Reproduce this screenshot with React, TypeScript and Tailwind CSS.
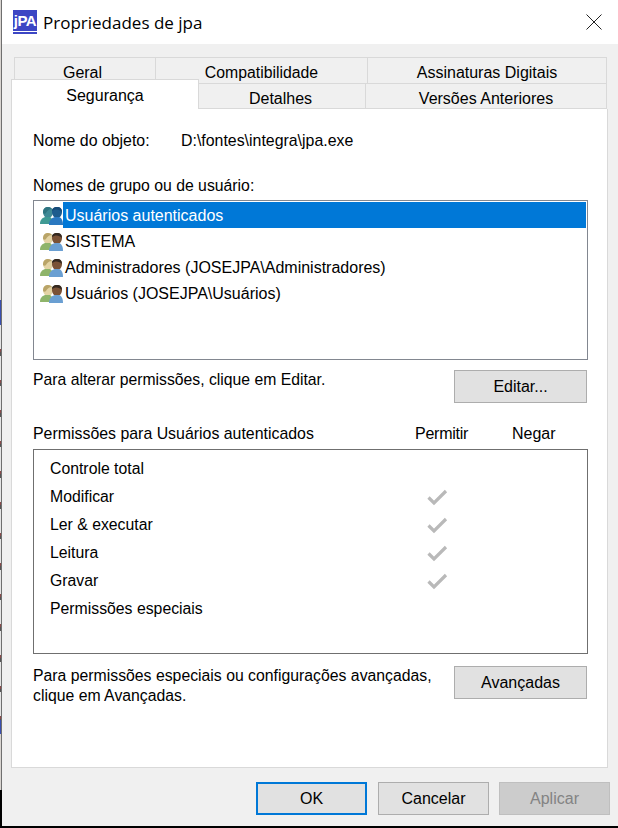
import React from 'react';

const font = "font-['Liberation_Sans',Arial,sans-serif]";

type IconProps = { selected?: boolean };

const UsersIcon: React.FC<IconProps> = ({ selected }) => (
  <svg width="23" height="21" viewBox="0 0 23 21" className="shrink-0">
    <path d="M3 7c0-3 2-5 5-5s5 2 5 5-2 6-5 6-5-3-5-6z" fill={selected ? '#3f8a96' : '#e3d3a4'} />
    <path d="M3 8c0-4 2-6 5-6 2 0 3 1 4 2-3 0-5 2-6 4-1 1-2 1-3 0z" fill={selected ? '#2f7480' : '#b9a468'} />
    <path d="M0 19c0-4 2-6 5-7h5c2 1 3 3 3 7z" fill={selected ? '#3f9a94' : '#8eb46a'} />
    <path d="M12 7c0-3 2-5 5-5s5 2 5 5-2 6-5 6-5-3-5-6z" fill={selected ? '#1d5c8e' : '#7a5236'} />
    <path d="M12 6c0-3 2-4 5-4s5 1 5 5c-2-2-5-3-8-2z" fill={selected ? '#154a78' : '#33281f'} />
    <path d="M9 20c0-4 2-7 6-8h4c3 1 4 4 4 8z" fill={selected ? '#2a78c0' : '#6a9fd2'} />
  </svg>
);

const CheckIcon = () => (
  <svg width="22" height="18" viewBox="0 0 22 18">
    <path d="M2.5 9.5L8 15L20 3" fill="none" stroke="#b9b9b9" strokeWidth="3.2" />
  </svg>
);

const TopTab: React.FC<{ label: string; className: string }> = ({ label, className }) => (
  <div className={`h-[27px] border-t border-l border-[#d9d9d9] bg-[#f0f0f0] text-center leading-[29px] ${className}`}>
    {label}
  </div>
);

const users = [
  'Usuários autenticados',
  'SISTEMA',
  'Administradores (JOSEJPA\\Administradores)',
  'Usuários (JOSEJPA\\Usuários)',
];

const permissions = [
  { name: 'Controle total', allowed: false },
  { name: 'Modificar', allowed: true },
  { name: 'Ler & executar', allowed: true },
  { name: 'Leitura', allowed: true },
  { name: 'Gravar', allowed: true },
  { name: 'Permissões especiais', allowed: false },
];

const App: React.FC = () => {
  return (
    <div className={`${font} flex h-[828px] w-[618px] overflow-hidden bg-[#f0f0f0] text-[16px] text-black`}>
      {/* sliver of the desktop behind the window */}
      <div className="flex w-[2px] shrink-0 flex-col">
        <div className="flex h-[790px] shrink-0">
          <div className="flex w-[1px] flex-col">
            <div className="h-[300px] bg-[#d8d4d0]" />
            <div className="h-[25px] bg-[#3a4fb0]" />
            <div className="h-[395px] bg-[repeating-linear-gradient(180deg,#e4e4e4_0,#e4e4e4_24px,#8a4a4a_24px,#8a4a4a_27px,#555555_27px,#555555_30.6px)]" />
            <div className="h-[14px] bg-[#3a4fb0]" />
            <div className="flex-1 bg-[#d8d4d0]" />
          </div>
          <div className="w-[1px] bg-[#6f6f6f]" />
        </div>
        <div className="flex-1 bg-black" />
      </div>
      <div className="flex min-w-0 flex-1 flex-col">
        {/* title bar */}
        <div className="flex h-[44px] shrink-0 items-center bg-white pl-[11px] pr-[16px]">
          <div className="flex h-[24px] w-[24px] flex-col items-center overflow-hidden bg-[#3c46c4]">
            <span className="mt-[1px] text-[15px] font-bold leading-[19px] tracking-[-0.5px] text-white">jPA</span>
            <span className="mt-[1px] h-[1px] w-full bg-white" />
          </div>
          <span className="ml-[6px] mt-[1px] font-['Open_Sans',sans-serif] text-[17px]">Propriedades de jpa</span>
          <svg width="16" height="16" viewBox="0 0 16 16" className="ml-auto">
            <path d="M0.5 0.5L15.5 15.5M15.5 0.5L0.5 15.5" stroke="#222" strokeWidth="1" />
          </svg>
        </div>

        {/* tabs */}
        <div className="ml-[12px] mr-[11px] mt-[13px] flex h-[26px] shrink-0">
          <TopTab label="Geral" className="w-[141px] pr-[5px]" />
          <TopTab label="Compatibilidade" className="w-[212px] text-[15.8px]" />
          <TopTab label="Assinaturas Digitais" className="flex-1 border-r" />
        </div>
        <div className="ml-[9px] mr-[11px] flex h-[26px] shrink-0 items-end">
          <div className="relative z-10 -mt-[3px] h-[30px] w-[188px] border-l border-r border-t border-[#d9d9d9] bg-white text-center leading-[31px]">
            Segurança
          </div>
          <div className="h-[26px] w-[166px] border-b border-t border-[#d9d9d9] pr-[3px] text-center leading-[30px]">Detalhes</div>
          <div className="h-[26px] flex-1 border border-[#d9d9d9] text-center leading-[30px]">Versões Anteriores</div>
        </div>

        {/* panel */}
        <div className="ml-[9px] mr-[10px] flex h-[659px] shrink-0 flex-col border border-t-0 border-[#d9d9d9] bg-white pl-[21px] pr-[19px]">
          <div className="mt-[23px] flex h-[18px] items-center text-[15.9px]">
            <span className="w-[148px]">Nome do objeto:</span>
            <span>D:\fontes\integra\jpa.exe</span>
          </div>
          <div className="mt-[27px] h-[18px] text-[15.8px] leading-[18px]">Nomes de grupo ou de usuário:</div>
          <div className="mt-[5px] h-[160px] border border-[#828790] p-[1px]">
            {users.map((u, i) => (
              <div key={u} className="flex h-[26px] items-center pl-[5px]">
                <UsersIcon selected={i === 0} />
                <span className={`h-full flex-1 pl-[2px] pt-[1px] leading-[26px] ${i === 0 ? 'bg-[#0078d7] text-white' : ''}`}>{u}</span>
              </div>
            ))}
          </div>
          <div className="mt-[10px] flex h-[33px] items-start justify-between pr-[1px]">
            <span className="text-[15.75px] leading-[20px]">Para alterar permissões, clique em Editar.</span>
            <button className="h-[33px] w-[133px] border border-[#adadad] bg-[#e1e1e1]">Editar...</button>
          </div>
          <div className="mt-[22px] flex h-[18px] items-center">
            <span className="w-[382px] text-[15.9px]">Permissões para Usuários autenticados</span>
            <span className="w-[97px] tracking-[-0.25px]">Permitir</span>
            <span>Negar</span>
          </div>
          <div className="mt-[6px] h-[205px] border border-[#6f6f6f] pl-[16px] pt-[5px] text-[15.8px]">
            {permissions.map(p => (
              <div key={p.name} className="flex h-[28px] items-center">
                <span className="w-[376px]">{p.name}</span>
                {p.allowed && <CheckIcon />}
              </div>
            ))}
          </div>
          <div className="mt-[12px] flex items-start justify-between pr-[1px]">
            <span className="text-[15.8px] leading-[20px]">
              Para permissões especiais ou configurações avançadas,
              <br />
              clique em Avançadas.
            </span>
            <button className="h-[33px] w-[133px] border border-[#adadad] bg-[#e1e1e1]">Avançadas</button>
          </div>
        </div>

        {/* footer buttons */}
        <div className="mr-[8px] mt-[14px] flex shrink-0 justify-end gap-[10px]">
          <button className="mr-[1px] h-[33px] w-[111px] border-2 border-[#0078d7] bg-[#e1e1e1]">OK</button>
          <button className="h-[33px] w-[111px] border border-[#adadad] bg-[#e1e1e1]">Cancelar</button>
          <button className="h-[33px] w-[111px] border border-[#bfbfbf] bg-[#cccccc] text-[#838383]">Aplicar</button>
        </div>
        <div className="mt-auto h-[2px] shrink-0 bg-black" />
      </div>
    </div>
  );
};

export default App;
